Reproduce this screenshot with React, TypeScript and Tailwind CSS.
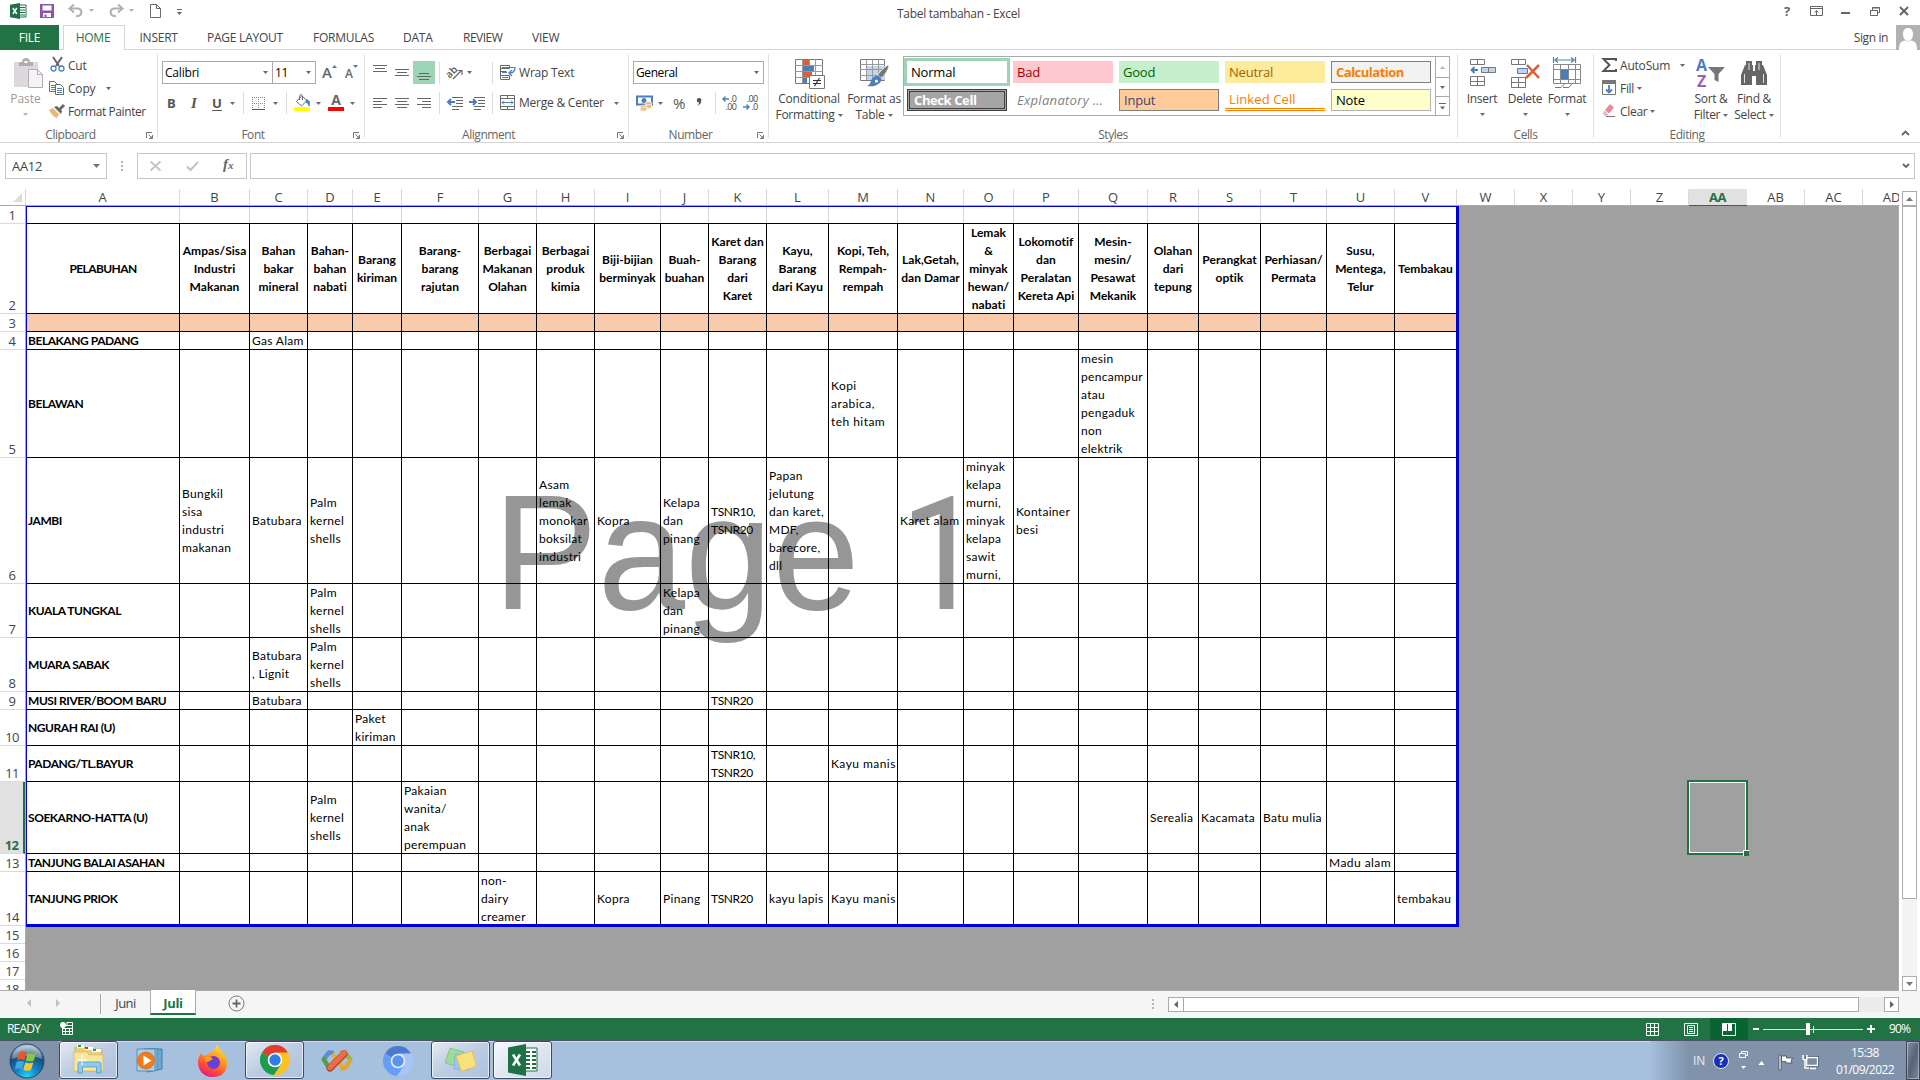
import React from "react";

type Kids = { children?: React.ReactNode };

/* ---------- shared bits ---------- */

function Arrow({ className = "", color = "#6a6a6a" }: { className?: string; color?: string }) {
  return (
    <svg width="5" height="3" viewBox="0 0 5 3" className={"shrink-0 " + className}>
      <path d="M0 0h5L2.500 3z" fill={color} />
    </svg>
  );
}

function Icon({ w, h, className = "", children }: Kids & { w: number; h: number; className?: string }) {
  return (
    <svg width={w} height={h} viewBox={`0 0 ${w} ${h}`} fill="none" className={"shrink-0 overflow-visible " + className}>
      {children}
    </svg>
  );
}

function Launcher() {
  return (
    <Icon w={7} h={7} className="mr-1 ml-[5px] mt-[1px]">
      <path d="M.5 6V.5H6" stroke="#777" />
      <path d="M2.500 2.500L6 6M6.500 3v3.500H3" stroke="#777" />
      <path d="M6.500 3.500v3h-3z" fill="#777" />
    </Icon>
  );
}

function Group({ label, launcher, className, children }: Kids & { label: string; launcher?: boolean; className: string }) {
  return (
    <div className={"flex h-[92px] shrink-0 pt-[4px] " + className}>
      <div className="flex min-w-0 flex-1 flex-col">
        <div className="h-[73px]">{children}</div>
        <div className="flex h-[15px] items-center">
          <span className="flex-1 text-center tracking-[-0.45px] text-[#666]">{label}</span>
          {launcher && <Launcher />}
        </div>
      </div>
      <div className="h-[84px] w-px bg-[#e1e1e1]" />
    </div>
  );
}

function Big({ icon, className, lines, arrow, dim }: { icon: React.ReactNode; className: string; lines: [string, string?]; arrow?: boolean; dim?: boolean }) {
  return (
    <div className={"flex shrink-0 flex-col items-center whitespace-nowrap leading-[16px] " + className + (dim ? " text-[#9b9b9b]" : "")}>
      <div className="mt-[3px] flex h-[32px] items-center">{icon}</div>
      <div className="mt-[2px]">{lines[0]}</div>
      {lines[1] ? (
        <div className="flex items-center gap-[3px]">
          {lines[1]}
          <Arrow />
        </div>
      ) : (
        arrow && <Arrow className="mt-[6px]" color={dim ? "#b5b5b5" : "#6a6a6a"} />
      )}
    </div>
  );
}

const Sep = ({ className = "" }: { className?: string }) => <div className={"h-[22px] w-px shrink-0 bg-[#dcdcdc] " + className} />;

/* ---------- title bar ---------- */

function TitleBar() {
  return (
    <div className="flex h-[25px] items-start">
      <div className="flex h-[23px] w-[200px] items-center">
        <Icon w={17} h={16} className="ml-[10px] mt-[-1px]">
          <path d="M8 2h8v12H8z" fill="#fff" stroke="#217346" />
          <path d="M10 4.500h5M10 7h5M10 9.500h5M10 12h5" stroke="#217346" />
          <path d="M0 1.800L10 0v16L0 14.200z" fill="#1e7145" />
          <path d="M2.800 5l4 6M6.800 5l-4 6" stroke="#fff" strokeWidth="1.500" />
        </Icon>
        <Icon w={14} h={14} className="ml-[13px] mt-[-1px]">
          <path d="M0 0h14v14H0z" fill="#8a56ac" />
          <path d="M2.500 1.500h9v5h-9zM3 9h8v4H3z" fill="#fff" />
          <path d="M4.500 10.500h2V13h-2z" fill="#8a56ac" />
        </Icon>
        <Icon w={16} h={13} className="ml-[14px] mt-[-2px]">
          <path d="M2 4.500h8a4 3.800 0 010 7.500H8" stroke="#b1b1b1" strokeWidth="2" />
          <path d="M6 .5L1.500 4.500 6 8.500" stroke="#b1b1b1" strokeWidth="2" />
        </Icon>
        <Arrow className="ml-[5px] mt-[-2px]" color="#b1b1b1" />
        <Icon w={16} h={13} className="ml-[14px] mt-[-2px]">
          <path d="M14 4.500H6a4 3.800 0 000 7.500h2" stroke="#b1b1b1" strokeWidth="2" />
          <path d="M10 .5l4.500 4-4.500 4" stroke="#b1b1b1" strokeWidth="2" />
        </Icon>
        <Arrow className="ml-[5px] mt-[-2px]" color="#b1b1b1" />
        <Icon w={11} h={14} className="ml-[16px] mt-[-1px]">
          <path d="M.5.5h6l4 4v9H.5z" stroke="#6a6a6a" />
          <path d="M6.500.5v4h4" stroke="#6a6a6a" />
        </Icon>
        <Icon w={5} h={6} className="ml-[16px]">
          <path d="M0 .5h5" stroke="#666" />
          <path d="M0 3h5L2.500 6z" fill="#666" />
        </Icon>
      </div>
      <div className="ml-[600px] w-[317px] pt-[5px] text-center leading-[18px] tracking-[-0.3px]">Tabel tambahan - Excel</div>
      <div className="ml-auto flex h-[22px] w-[139px] items-center">
        <span className="w-[12px] text-center text-[13px] font-bold text-[#666]">?</span>
        <Icon w={13} h={10} className="ml-[17px]">
          <path d="M.5.5h12v9H.5zM0 2.500h13M6.500 9V4.500M4.500 6.500l2-2 2 2" stroke="#666" />
        </Icon>
        <Icon w={9} h={10} className="ml-[18px]">
          <path d="M0 7h9" stroke="#666" strokeWidth="2" />
        </Icon>
        <Icon w={10} h={9} className="ml-[20px]">
          <path d="M2.500 3V.5h7v5H7.500M.5 3.500h7v5h-7z" stroke="#666" />
          <path d="M0 3.500h8M2 1h8" stroke="#666" />
        </Icon>
        <Icon w={10} h={10} className="ml-[19px]">
          <path d="M1 1l8 8M9 1L1 9" stroke="#666" strokeWidth="2" />
        </Icon>
      </div>
    </div>
  );
}

/* ---------- ribbon tabs ---------- */

function RibbonTabs() {
  const line = "border-b border-[#d4d4d4]";
  return (
    <div className="flex h-[25px] tracking-[-0.24px] leading-[25px]">
      <div className="w-[59px] bg-[#217346] text-center text-white">FILE</div>
      <div className={"w-[4px] " + line} />
      <div className="w-[62px] border-x border-t border-[#d4d4d4] bg-white pr-[2px] text-center leading-[23px] text-[#217346]">HOME</div>
      <div className={"flex flex-1 whitespace-nowrap " + line}>
        <span className="ml-[14.500px] w-[67.500px]">INSERT</span>
        <span className="w-[106px]">PAGE LAYOUT</span>
        <span className="w-[90px]">FORMULAS</span>
        <span className="w-[60px]">DATA</span>
        <span className="w-[69px] tracking-[-0.5px]">REVIEW</span>
        <span>VIEW</span>
        <span className="ml-auto mr-[8px] tracking-[-0.4px]">Sign in</span>
      </div>
      <Icon w={24} h={25}>
        <path d="M0 0h24v25H0z" fill="#b1b1b1" />
        <path d="M7 9c0-4 2-6 5-6s5 2 5 6-2 7-5 7-5-3-5-7zM3 25c0-7 2-9 6-9.500l3 1 3-1c4 .5 6 2.500 6 9.500z" fill="#fff" />
      </Icon>
    </div>
  );
}

/* ---------- ribbon groups ---------- */

function ClipboardGroup() {
  return (
    <Group label="Clipboard" launcher className="w-[158px]">
      <div className="flex">
        <Big
          className="ml-[5px] w-[41px]"
          dim
          arrow
          lines={["Paste"]}
          icon={
            <Icon w={30} h={30} className="ml-[4px]">
              <path d="M1 4h24v25H1z" fill="#dcd8dc" />
              <path d="M6 4h3c0-2.500 1.500-4 4-4s4 1.500 4 4h3v4H6z" fill="#b1aeb1" />
              <path d="M11.500 3h3v2h-3z" fill="#fff" />
              <path d="M15.500 11.500h9l5 5v13h-14z" fill="#f6f2f8" stroke="#b1aeb1" />
              <path d="M24.500 11.500v5h5" stroke="#b1aeb1" />
            </Icon>
          }
        />
        <div className="ml-[3px]">
          <div className="flex h-[23px] items-center">
            <Icon w={15} h={15} className="mb-[2px] ml-[1px]">
              <path d="M3 0l6 9M12 0L6 9" stroke="#666" strokeWidth="2" />
              <circle cx="3.500" cy="11.500" r="2.500" stroke="#4a7ebb" strokeWidth="1.300" />
              <circle cx="11.500" cy="11.500" r="2.500" stroke="#4a7ebb" strokeWidth="1.300" />
            </Icon>
            <span className="ml-[3px] tracking-[-0.2px]">Cut</span>
          </div>
          <div className="flex h-[23px] items-center">
            <Icon w={15} h={14} className="mb-[2px]">
              <path d="M.5.5h5l2 2v8h-7z" fill="#fff" stroke="#6a6a6a" />
              <path d="M2 4.500h4M2 6.500h4M2 8.500h4" stroke="#4a7ebb" />
              <path d="M6.500 3.500h5l3 3v7h-8z" fill="#fff" stroke="#6a6a6a" />
              <path d="M8 7.500h5M8 9.500h5M8 11.500h5" stroke="#4a7ebb" />
            </Icon>
            <span className="ml-[4px] tracking-[-0.2px]">Copy</span>
            <Arrow className="ml-[11px]" />
          </div>
          <div className="flex h-[23px] items-center">
            <Icon w={16} h={14} className="mb-[2px]">
              <path d="M0 6l4-2 6 6-2 4c-3-1-6-4-8-8z" fill="#e8b972" />
              <path d="M5 3l3-1 5 5-1 3z" fill="#666" />
              <path d="M10 4.500L14 .5l1.500 1.500-4 4z" fill="#666" stroke="#666" />
            </Icon>
            <span className="ml-[3px] whitespace-nowrap tracking-[-0.42px]">Format Painter</span>
          </div>
        </div>
      </div>
    </Group>
  );
}

function FontGroup() {
  return (
    <Group label="Font" launcher className="w-[207px]">
      <div className="ml-[4px] mt-[7px] flex h-[23px] text-black">
        <div className="flex w-[111px] items-center border border-[#ababab] pl-[2px] tracking-[-0.2px]">
          Calibri
          <Arrow className="ml-auto mr-[4px]" />
        </div>
        <div className="-ml-px flex w-[44px] items-center border border-[#ababab] pl-[2px] tracking-[-0.3px]">
          11
          <Arrow className="ml-auto mr-[4px]" />
        </div>
        <div className="ml-[6px] flex h-full items-end pb-[2px] leading-[20px]">
          <span className="text-[15px] font-semibold leading-[19px] text-[#666]">A</span>
          <Icon w={5} h={3} className="mb-[14px]">
            <path d="M0 3h5L2.500 0z" fill="#4a7ebb" />
          </Icon>
          <span className="ml-[8px] text-[12px] font-semibold leading-[17px] text-[#666]">A</span>
          <Icon w={5} h={3} className="mb-[14px]">
            <path d="M0 0h5L2.500 3z" fill="#4a7ebb" />
          </Icon>
        </div>
      </div>
      <div className="mt-[8px] flex h-[22px] items-center">
        <span className="ml-[9px] w-[8px] text-[13px] font-bold text-[#555]">B</span>
        <span className="ml-[14px] w-[10px] text-center font-[Liberation_Serif] text-[15px] font-bold italic text-[#555]">I</span>
        <span className="ml-[13px] w-[10px] text-center text-[13px] font-bold text-[#555] underline underline-offset-2">U</span>
        <Arrow className="ml-[8px]" />
        <Sep className="ml-[8px]" />
        <Icon w={13} h={13} className="ml-[8px]">
          <path d="M.5 0v12M6.500 0v12M12.500 0v12M0 .5h13M0 6.500h13" stroke="#888" strokeDasharray="1 1" />
          <path d="M0 12.500h13" stroke="#555" />
        </Icon>
        <Arrow className="ml-[8px]" />
        <Sep className="ml-[8px]" />
        <Icon w={17} h={17} className="ml-[7px] mt-[-2px]">
          <path d="M7.500 2L2.500 7.500l5 4.500 5.500-5.500L8 2z" fill="#fff" stroke="#6a6a6a" />
          <path d="M5.500 6V2.500C5.500 0 8.500 0 8.500 2.500V6" stroke="#6a6a6a" />
          <path d="M12.500 5.500c3 1 3.500 3 2.500 6.500-.5-2-1.500-3-3-4z" fill="#4a7ebb" stroke="#4a7ebb" />
          <path d="M0 13h16v4H0z" fill="#ff0" />
        </Icon>
        <Arrow className="ml-[5px]" />
        <div className="ml-[7px] mt-[-2px] flex h-[18px] w-[16px] flex-col items-center border-b-4 border-[red]">
          <span className="text-[14px] font-bold leading-[14px] text-[#666]">A</span>
        </div>
        <Arrow className="ml-[6px]" />
      </div>
    </Group>
  );
}

function Lines({ kind, className = "" }: { kind: "left" | "center" | "right" | "vtop" | "vmid" | "vbot"; className?: string }) {
  const d = {
    left: "M0 3.500h14M0 6.500h9M0 9.500h14M0 12.500h9",
    center: "M0 3.500h14M2 6.500h10M0 9.500h14M2 12.500h10",
    right: "M0 3.500h14M5 6.500h9M0 9.500h14M5 12.500h9",
    vtop: "M0 .5h14M2 3.500h10M0 6.500h14",
    vmid: "M0 4.500h14M2 7.500h10M0 10.500h14",
    vbot: "M2 8.500h10M0 11.500h14M2 14.500h10",
  }[kind];
  return (
    <Icon w={14} h={16} className={className}>
      <path d={d} stroke="#666" />
    </Icon>
  );
}

function AlignmentGroup() {
  return (
    <Group label="Alignment" launcher className="w-[264px]">
      <div className="mt-[7px] flex h-[23px] items-center">
        <Lines kind="vtop" className="ml-[8px]" />
        <Lines kind="vmid" className="ml-[8px]" />
        <div className="ml-[4px] flex h-[23px] w-[22px] items-center justify-center bg-[#9fd5b7]">
          <Lines kind="vbot" />
        </div>
        <Sep className="ml-[4px]" />
        <Icon w={16} h={15} className="ml-[7px]">
          <text x="-1" y="11" fontSize="10" fontWeight="600" fill="#555" fontFamily="Open Sans" transform="rotate(-45 4 8)">ab</text>
          <path d="M6 14l8-8M10.500 5.500H15V10" stroke="#666" strokeWidth="1.200" />
        </Icon>
        <Arrow className="ml-[4px]" />
        <Sep className="ml-[20px]" />
        <Icon w={16} h={16} className="ml-[7px] mt-[-2px]">
          <path d="M.5 1v14M.5 1.500h9v3h-9M.5 7.500h6M.5 15.500h9v-4h-9" stroke="#6a6a6a" />
          <path d="M2 3.500h12M2 8.500h5M2 13.500h6" stroke="#4a7ebb" />
          <path d="M15 3c0 4-1 6-5 6M12 6L9 9l3 3" stroke="#4a7ebb" strokeWidth="1.300" />
        </Icon>
        <span className="ml-[3px] whitespace-nowrap tracking-[-0.2px]">Wrap Text</span>
      </div>
      <div className="mt-[8px] flex h-[22px] items-center">
        <Lines kind="left" className="ml-[8px]" />
        <Lines kind="center" className="ml-[8px]" />
        <Lines kind="right" className="ml-[8px]" />
        <Sep className="ml-[8px]" />
        <Icon w={16} h={14} className="ml-[7px]">
          <path d="M5 1.500h11M9 4.500h7M9 7.500h7M5 10.500h11M5 13.500h7" stroke="#666" />
          <path d="M8 6H2M4 3L1 6l3 3" stroke="#4a7ebb" strokeWidth="2" />
        </Icon>
        <Icon w={16} h={14} className="ml-[6px]">
          <path d="M5 1.500h11M9 4.500h7M9 7.500h7M5 10.500h11M5 13.500h7" stroke="#666" />
          <path d="M0 6h6M4 3l3 3-3 3" stroke="#4a7ebb" strokeWidth="2" />
        </Icon>
        <Sep className="ml-[7px]" />
        <Icon w={15} h={15} className="ml-[7px] mt-[-1px]">
          <path d="M.5.5h14v14H.5zM0 3.500h15M0 11.500h15M7.500 0v3.500M7.500 11.500V15" stroke="#6a6a6a" />
          <path d="M2 7.500h11M4 5.500l-2 2 2 2M11 5.500l2 2-2 2" stroke="#4a7ebb" />
        </Icon>
        <span className="ml-[4px] whitespace-nowrap tracking-[-0.23px]">Merge &amp; Center</span>
        <Arrow className="ml-[10px]" />
      </div>
    </Group>
  );
}

function NumberGroup() {
  return (
    <Group label="Number" launcher className="w-[140px]">
      <div className="ml-[4px] mt-[7px] flex h-[23px] w-[131px] items-center border border-[#ababab] pl-[2px] tracking-[-0.4px] text-black">
        General
        <Arrow className="ml-auto mr-[4px]" />
      </div>
      <div className="mt-[8px] flex h-[22px] items-center">
        <Icon w={17} h={16} className="ml-[7px]">
          <path d="M1 1.500h15v8H1z" fill="#fff" stroke="#4a7ebb" strokeWidth="2" />
          <circle cx="8" cy="5.500" r="2.500" fill="#4a7ebb" />
          <ellipse cx="12.500" cy="8.500" rx="3.500" ry="2" fill="#e8c07d" stroke="#fff" strokeWidth=".6" />
          <ellipse cx="12.500" cy="11.500" rx="3.500" ry="2" fill="#e8c07d" stroke="#fff" strokeWidth=".6" />
          <ellipse cx="7.500" cy="12" rx="3.500" ry="1.800" fill="#e8c07d" stroke="#fff" strokeWidth=".6" />
          <ellipse cx="7.500" cy="14.200" rx="3.500" ry="1.800" fill="#e8c07d" stroke="#fff" strokeWidth=".6" />
        </Icon>
        <Arrow className="ml-[5px]" />
        <span className="ml-[10px] w-[13px] text-[15px] text-[#555]">%</span>
        <Icon w={6} h={8} className="ml-[10px] mt-[-3px]">
          <path d="M3 0a2.200 2.200 0 012.300 2.500C5.300 5 4 6.500 1.500 8 2.500 6.500 3 5.500 3 4.500A2.200 2.200 0 013 0z" fill="#555" />
        </Icon>
        <Sep className="ml-[13px]" />
        <div className="ml-[6px] flex flex-col items-end text-[9px] leading-[8px] tracking-[-0.6px] text-[#444]">
          <span className="flex items-center gap-[1px]">
            <Icon w={7} h={6}>
              <path d="M7 3H1.500M3.500.5L1 3l2.500 2.500" stroke="#4a7ebb" strokeWidth="1.400" />
            </Icon>
            .0
          </span>
          <span>.00</span>
        </div>
        <div className="ml-[7px] flex flex-col items-end text-[9px] leading-[8px] tracking-[-0.6px] text-[#444]">
          <span>.00</span>
          <span className="flex items-center gap-[1px]">
            <Icon w={7} h={6}>
              <path d="M0 3h5.500M3.500.5L6 3 3.500 5.500" stroke="#4a7ebb" strokeWidth="1.400" />
            </Icon>
            .0
          </span>
        </div>
      </div>
    </Group>
  );
}

function StylesGroup() {
  const chip = "flex h-[22px] w-[100px] items-center whitespace-nowrap pl-[4px]";
  return (
    <Group label="Styles" className="w-[689px]">
      <div className="flex tracking-[-0.24px]">
        <Big
          className="ml-[1px] w-[78px]"
          lines={["Conditional", "Formatting"]}
          icon={
            <Icon w={30} h={31} className="ml-[2px]">
              <path d="M.5 1.500h27v24H.5z" fill="#fff" stroke="#777" />
              <path d="M7.500 1v24M14.500 1v24M20.500 1v24M0 7.500h28M0 13.500h28M0 19.500h28" stroke="#999" />
              <path d="M8 2h6v5H8zM8 14h9v5H8z" fill="#d9603b" />
              <path d="M8 8h11v5H8zM8 20h4v5H8z" fill="#4a7ebb" />
              <path d="M14.500 17.500h15v13h-15z" fill="#fff" stroke="#777" />
              <path d="M18 22.500h8M18 25.500h8M24.500 20l-5 8" stroke="#333" strokeWidth="1.200" />
            </Icon>
          }
        />
        <Big
          className="w-[52px]"
          lines={["Format as", "Table"]}
          icon={
            <Icon w={30} h={30} className="ml-[2px]">
              <path d="M.5 1.500h24v21H.5z" fill="#fff" stroke="#777" />
              <path d="M7 8h18v14H7z" fill="#c3d5ea" />
              <path d="M6.500 1v21M12.500 1v21M18.500 1v21M0 6.500h25M0 11.500h25M0 17.500h25" stroke="#999" />
              <path d="M28.500 7c1 3-3 9-7 13l-4-3c4-5 8-9 11-10z" fill="#777" stroke="#fff" strokeWidth=".7" />
              <path d="M17 18c3 0 5 2 4 5-2 4-7 6-14 5 3-1 3-3 4-5 1-3 3-5 6-5z" fill="#4a7ebb" />
              <path d="M15 22c1.500-.8 3 0 3 1.200s-2 1.800-3 1z" fill="#fff" />
            </Icon>
          }
        />
        <div className="ml-[3px] mt-[2px] flex h-[60px] w-[547px] border border-[#ababab] text-[13px] tracking-[-0.2px]">
          <div className="grid w-[531px] grid-cols-[repeat(5,100px)] content-start gap-[6px] pl-[3px] pt-[4px]">
            <div className={chip + " bg-white text-black shadow-[0_0_0_3px_#9fd5b7]"}>Normal</div>
            <div className={chip + " bg-[#ffc7ce] text-[#9c0006]"}>Bad</div>
            <div className={chip + " bg-[#c6efce] text-[#006100]"}>Good</div>
            <div className={chip + " bg-[#ffeb9c] text-[#9c6500]"}>Neutral</div>
            <div className={chip + " border border-[#7f7f7f] bg-[#f2f2f2] pl-[3px] font-bold tracking-[-0.5px] text-[#fa7d00]"}>Calculation</div>
            <div className={chip + " border-3 border-double border-[#3f3f3f] bg-[#a5a5a5] pl-[1px] font-bold tracking-[-0.4px] text-white"}>Check Cell</div>
            <div className={chip + " italic tracking-[0.3px] text-[#7f7f7f]"}>Explanatory ...</div>
            <div className={chip + " border border-[#7f7f7f] bg-[#ffcc99] pl-[3px] text-[#3f3f76]"}>Input</div>
            <div className={chip + " border-b-3 border-double border-[#ff8001] tracking-[0.1px] text-[#fa7d00]"}>Linked Cell</div>
            <div className={chip + " border border-[#b2b2b2] bg-[#ffffcc] pl-[3px] text-black"}>Note</div>
          </div>
          <div className="flex flex-1 flex-col border-l border-[#ababab]">
            <div className="flex h-[20px] items-center justify-center">
              <Icon w={5} h={3}>
                <path d="M0 3h5L2.500 0z" fill="#b1b1b1" />
              </Icon>
            </div>
            <div className="flex h-[20px] items-center justify-center border-y border-[#ababab]">
              <Arrow />
            </div>
            <div className="flex flex-1 items-center justify-center">
              <Icon w={7} h={7}>
                <path d="M0 .5h7" stroke="#666" />
                <path d="M1 3.500h5L3.500 6.500z" fill="#666" />
              </Icon>
            </div>
          </div>
        </div>
      </div>
    </Group>
  );
}

function CellsGroup() {
  return (
    <Group label="Cells" className="w-[136px]">
      <div className="flex tracking-[-0.3px]">
        <Big
          className="ml-[2px] w-[44px]"
          arrow
          lines={["Insert"]}
          icon={
            <Icon w={26} h={28} className="mb-[1px] ml-[2px]">
              <path d="M.5.5h14v5H.5zM7.500.5v5M.5 17.500h14v9H.5zM7.500 17.500v9M.5 22.500h14" stroke="#777" fill="#fff" />
              <path d="M11.500 8.500h14v5h-14z" fill="#c3d5ea" stroke="#777" />
              <path d="M18.500 8.500v5" stroke="#777" />
              <path d="M8 11H2M4.500 8L1.500 11l3 3" stroke="#4a7ebb" strokeWidth="1.800" />
            </Icon>
          }
        />
        <Big
          className="w-[42px]"
          arrow
          lines={["Delete"]}
          icon={
            <Icon w={29} h={29} className="ml-[1px]">
              <path d="M.5.5h14v5H.5zM7.500.5v5M.5 18.500h14v10H.5zM7.500 18.500v10M.5 23.500h14" stroke="#777" fill="#fff" />
              <path d="M6.500 9.500h10v5h-10z" fill="#c3d5ea" stroke="#4a7ebb" />
              <path d="M16 6l12 13M28 6L15 19" stroke="#d9603b" strokeWidth="2.500" />
            </Icon>
          }
        />
        <Big
          className="w-[42px]"
          arrow
          lines={["Format"]}
          icon={
            <Icon w={28} h={32}>
              <path d="M.5 0v6M22.500 0v6M2 3h19M5 .5L2 3l3 2.500M18 .5L21 3l-3 2.500" stroke="#4a7ebb" strokeWidth="1.200" />
              <path d="M.5 7.500h27v19H.5zM7.500 7.500v19M15.500 7.500v19M22.500 7.500v19M0 12.500h28M0 22.500h28" stroke="#888" fill="#fff" />
              <path d="M8 13h7v9H8z" fill="#4a7ebb" />
              <path d="M2 30.500h6l4-4M10 30.500h6l3-4" stroke="#777" />
            </Icon>
          }
        />
      </div>
    </Group>
  );
}

function EditingGroup() {
  return (
    <Group label="Editing" className="w-[187px]">
      <div className="flex tracking-[-0.3px]">
        <div className="w-[99px] pl-[8px]">
          <div className="flex h-[23px] items-center">
            <Icon w={15} h={14} className="mb-[2px]">
              <path d="M14 3V1H1.500l6 6-6 6H14v-2" stroke="#555" strokeWidth="2" />
            </Icon>
            <span className="ml-[3px] tracking-[-0.2px]">AutoSum</span>
            <Arrow className="ml-[10px]" />
          </div>
          <div className="flex h-[23px] items-center">
            <Icon w={14} h={15} className="mb-[3px]">
              <path d="M.5.5h13v14H.5z" fill="#fff" stroke="#777" />
              <path d="M0 0h14v4H0z" fill="#777" />
              <path d="M7 5v8M4 9.500L7 12.500l3-3" stroke="#4a7ebb" strokeWidth="1.800" />
            </Icon>
            <span className="ml-[4px]">Fill</span>
            <Arrow className="ml-[3px]" />
          </div>
          <div className="flex h-[23px] items-center">
            <Icon w={14} h={13} className="mb-[3px]">
              <path d="M8 0l4 3.500-5 6-4-3.500z" fill="#e8899b" />
              <path d="M2.500 6.500l4 3.500-1.500 2H3L.5 9.500z" fill="#f3b9c4" />
              <path d="M4 12.500h9" stroke="#777" />
            </Icon>
            <span className="ml-[4px]">Clear</span>
            <Arrow className="ml-[3px]" />
          </div>
        </div>
        <Big
          className="w-[36px]"
          lines={["Sort &", "Filter"]}
          icon={
            <Icon w={30} h={29}>
              <text x="0" y="12" fontSize="16" fontWeight="700" fill="#4a7ebb" fontFamily="Open Sans">A</text>
              <text x="1" y="28" fontSize="16" fontWeight="700" fill="#9b5fb5" fontFamily="Open Sans">Z</text>
              <path d="M12 8h17l-6.500 7v8l-4-2v-6z" fill="#777" />
            </Icon>
          }
        />
        <Big
          className="w-[50px]"
          lines={["Find &", "Select"]}
          icon={
            <Icon w={26} h={24}>
              <path d="M5 0h6v5H5zM15 0h6v5h-6zM4 4h8v6h2V4h8l4 10v10H15v-9h-4v9H0V14z" fill="#666" />
              <path d="M3.500 13v9M22.500 13v9M8 2v7M18 2v7" stroke="#fff" strokeWidth=".8" />
            </Icon>
          }
        />
      </div>
    </Group>
  );
}

/* ---------- formula bar ---------- */

function FormulaBar() {
  return (
    <div className="flex h-[46px] items-start border-t border-[#d4d4d4] pt-[10px] text-[#444]">
      <div className="ml-[5px] flex h-[26px] w-[102px] items-center border border-[#c6c6c6] pl-[6px] text-[13px] tracking-[-0.3px]">
        AA12
        <Icon w={7} h={4} className="ml-auto mr-[6px]">
          <path d="M0 0h7L3.500 4z" fill="#777" />
        </Icon>
      </div>
      <Icon w={2} h={10} className="ml-[14px] mt-[8px]">
        <path d="M0 0h2v2H0zM0 4h2v2H0zM0 8h2v2H0z" fill="#b5b5b5" />
      </Icon>
      <div className="ml-[14px] flex h-[26px] w-[110px] items-center border border-[#c6c6c6]">
        <Icon w={11} h={10} className="ml-[12px]">
          <path d="M.5.5l10 9M10.500.5l-10 9" stroke="#c3c3c3" strokeWidth="1.800" />
        </Icon>
        <Icon w={13} h={10} className="ml-[25px]">
          <path d="M1 5.500L4.500 9 12 1" stroke="#c3c3c3" strokeWidth="2" />
        </Icon>
        <span className="ml-[24px] mt-[-3px] font-[Liberation_Serif] text-[15px] font-bold italic leading-[20px] text-[#666]">
          f<span className="text-[11px]">x</span>
        </span>
      </div>
      <div className="ml-[3px] flex h-[26px] w-[1665px] items-center border border-[#c6c6c6]">
        <Icon w={8} h={6} className="ml-auto mr-[4px]">
          <path d="M1 1l3 3 3-3" stroke="#666" strokeWidth="1.800" />
        </Icon>
      </div>
    </div>
  );
}

/* ---------- sheet ---------- */

const COLS: [string, number][] = [
  ["A", 154], ["B", 70], ["C", 58], ["D", 45], ["E", 49], ["F", 77], ["G", 58], ["H", 58], ["I", 66], ["J", 48], ["K", 58],
  ["L", 62], ["M", 69], ["N", 66], ["O", 50], ["P", 65], ["Q", 69], ["R", 51], ["S", 62], ["T", 66], ["U", 68], ["V", 62],
];
const REST: [string, number][] = [["W", 58], ["X", 58], ["Y", 58], ["Z", 58], ["AA", 58], ["AB", 58], ["AC", 58], ["AD", 58]];

const HEADERS = [
  "PELABUHAN", "Ampas/Sisa\nIndustri\nMakanan", "Bahan\nbakar\nmineral", "Bahan-\nbahan\nnabati", "Barang\nkiriman",
  "Barang-\nbarang\nrajutan", "Berbagai\nMakanan\nOlahan", "Berbagai\nproduk\nkimia", "Biji-bijian\nberminyak", "Buah-\nbuahan",
  "Karet dan\nBarang\ndari\nKaret", "Kayu,\nBarang\ndari Kayu", "Kopi, Teh,\nRempah-\nrempah", "Lak,Getah,\ndan Damar",
  "Lemak\n&\nminyak\nhewan/\nnabati", "Lokomotif\ndan\nPeralatan\nKereta Api", "Mesin-\nmesin/\nPesawat\nMekanik",
  "Olahan\ndari\ntepung", "Perangkat\noptik", "Perhiasan/\nPermata", "Susu,\nMentega,\nTelur", "Tembakau",
];

type Row = { n: number; h: number; name?: string; cells?: Record<string, string> };

const PALM = "Palm\nkernel\nshells";
const ROWS: Row[] = [
  { n: 1, h: 18 },
  { n: 2, h: 90 },
  { n: 3, h: 18 },
  { n: 4, h: 18, name: "BELAKANG PADANG", cells: { C: "Gas Alam" } },
  { n: 5, h: 108, name: "BELAWAN", cells: { M: "Kopi\narabica,\nteh hitam", Q: "mesin\npencampur\natau\npengaduk\nnon\nelektrik" } },
  {
    n: 6, h: 126, name: "JAMBI",
    cells: {
      B: "Bungkil\nsisa\nindustri\nmakanan", C: "Batubara", D: PALM, H: "Asam\nlemak\nmonokar\nboksilat\nindustri", I: "Kopra",
      J: "Kelapa\ndan\npinang", K: "TSNR10,\nTSNR20", L: "Papan\njelutung\ndan karet,\nMDF,\nbarecore,\ndll", N: "Karet alam",
      O: "minyak\nkelapa\nmurni,\nminyak\nkelapa\nsawit\nmurni,", P: "Kontainer\nbesi",
    },
  },
  { n: 7, h: 54, name: "KUALA TUNGKAL", cells: { D: PALM, J: "Kelapa\ndan\npinang" } },
  { n: 8, h: 54, name: "MUARA SABAK", cells: { C: "Batubara\n, Lignit", D: PALM } },
  { n: 9, h: 18, name: "MUSI RIVER/BOOM BARU", cells: { C: "Batubara", K: "TSNR20" } },
  { n: 10, h: 36, name: "NGURAH RAI (U)", cells: { E: "Paket\nkiriman" } },
  { n: 11, h: 36, name: "PADANG/TL.BAYUR", cells: { K: "TSNR10,\nTSNR20", M: "Kayu manis" } },
  {
    n: 12, h: 72, name: "SOEKARNO-HATTA (U)",
    cells: { D: PALM, F: "Pakaian\nwanita/\nanak\nperempuan", R: "Serealia", S: "Kacamata", T: "Batu mulia" },
  },
  { n: 13, h: 18, name: "TANJUNG BALAI ASAHAN", cells: { U: "Madu alam" } },
  { n: 14, h: 54, name: "TANJUNG PRIOK", cells: { G: "non-\ndairy\ncreamer", I: "Kopra", J: "Pinang", K: "TSNR20", L: "kayu lapis", M: "Kayu manis", V: "tembakau" } },
];

function cellClass(n: number, col: string) {
  if (n === 1) return "border-r-[#d4d4d4]";
  if (n === 2) return "justify-center text-center font-bold border-r-black " + (col === "A" ? "tracking-[-0.6px]" : "tracking-[0.05px]");
  if (n === 3) return "bg-[#f8cbad] border-r-black";
  if (col === "A") return "font-bold pl-[1px] tracking-[-0.45px] border-r-black";
  if (col === "K") return "pl-[2px] tracking-[-0.4px] border-r-black";
  if (col === "M" || col === "U") return "pl-[2px] tracking-[0.45px] border-r-black";
  return "pl-[2px] tracking-[0.3px] border-r-black";
}

function HeaderCell({ name, w, active }: { name: string; w: number; active?: boolean }) {
  return (
    <div
      style={{ width: w }}
      className={
        "flex h-[16px] shrink-0 items-center justify-center border-r text-[13px] leading-[15px] " +
        (active ? "border-[#e1e1e1] bg-[#e1e1e1] font-bold tracking-[-0.5px] text-[#217346] shadow-[0_1px_0_#217346]" : "border-[#dadada] text-[#444]")
      }
    >
      {name}
    </div>
  );
}

function Sheet() {
  return (
    <div className="flex h-[802px] font-[Open_Sans]">
      <div className="flex w-[1899px] flex-col overflow-hidden">
        <div className="z-10 flex h-[16px] w-[1899px] shrink-0">
          <div className="flex h-[16px] w-[26px] shrink-0 items-end justify-end border-r border-[#dadada] pb-[3px] pr-[3px]">
            <Icon w={9} h={9}>
              <path d="M9 0v9H0z" fill="#dcdcdc" />
            </Icon>
          </div>
          {COLS.map(([n, w]) => (
            <HeaderCell key={n} name={n} w={w} />
          ))}
          {REST.map(([n, w]) => (
            <HeaderCell key={n} name={n} w={w} active={n === "AA"} />
          ))}
        </div>
        <div className="flex h-[786px] border-b border-t border-[#ababab]">
          <div className="w-[26px] shrink-0 overflow-hidden border-r border-[#ababab] bg-white">
            {[...ROWS, { n: 15, h: 18 }, { n: 16, h: 18 }, { n: 17, h: 18 }, { n: 18, h: 18 }].map((r) => (
              <div
                key={r.n}
                style={{ height: r.h }}
                className={
                  "flex items-end justify-center border-b text-[13px] leading-[16px] tracking-[-0.6px] " +
                  (r.n === 12 ? "border-r-2 border-b-[#dadada] border-r-[#217346] bg-[#e1e1e1] font-bold text-[#217346]" : "border-[#dadada] pr-[1px] text-[#444]")
                }
              >
                {r.n}
              </div>
            ))}
          </div>
          <div className="relative flex-1 overflow-hidden border-r border-[#ababab] bg-[#a0a0a0]">
            <div className="relative h-[721px] w-[1433px] overflow-hidden border-b-3 border-l border-r-3 border-t border-[#0000d4] bg-white">
              <div className="absolute left-[466px] top-[256px] scale-y-104 whitespace-pre font-[Liberation_Sans] text-[157px] leading-[180px] text-[#969696]">
                Page <span className="-ml-[4px] font-[Roboto] text-[152px] leading-none">1</span>
              </div>
              <div className="relative -mt-px font-[Lato] text-[12px] leading-[18px] text-black">
                {ROWS.map((r) => (
                  <div key={r.n} style={{ height: r.h }} className="flex border-b border-black">
                    {COLS.map(([c, w], i) => (
                      <div
                        key={c}
                        style={{ width: c === "A" ? w - 1 : w }}
                        className={"flex shrink-0 items-center overflow-visible whitespace-pre border-r " + cellClass(r.n, c)}
                      >
                        {r.n === 2 ? HEADERS[i] : c === "A" ? r.name : r.cells?.[c]}
                      </div>
                    ))}
                  </div>
                ))}
              </div>
            </div>
            <div className="absolute left-[1661px] top-[574px] h-[75px] w-[61px] border-2 border-[#217346]">
              <div className="h-full w-full border border-white" />
              <div className="absolute -bottom-[3px] -right-[3px] h-[6px] w-[6px] border-l border-t border-white bg-[#217346]" />
            </div>
          </div>
        </div>
      </div>
      <div className="z-20 flex w-[21px] flex-col bg-white pl-[3px] pt-[2px]">
        <div className="flex h-[15px] w-[15px] items-center justify-center border border-[#ababab]">
          <Icon w={7} h={4}>
            <path d="M0 4h7L3.500 0z" fill="#777" />
          </Icon>
        </div>
        <div className="h-[693px] w-[15px] border border-[#ababab] bg-white" />
        <div className="w-[15px] flex-1 bg-[#f3f3f3]" />
        <div className="flex h-[15px] w-[15px] items-center justify-center border border-[#ababab] bg-white">
          <Icon w={7} h={4}>
            <path d="M0 0h7L3.500 4z" fill="#777" />
          </Icon>
        </div>
      </div>
    </div>
  );
}

/* ---------- sheet tabs + status ---------- */

function SheetTabs() {
  return (
    <div className="z-20 flex h-[27px] bg-[#f5f5f5] text-[13px]">
      <Icon w={34} h={8} className="ml-[27px] mt-[8px]">
        <path d="M4 0v8L0 4zM29 0v8l4-4z" fill="#c0c0c0" />
      </Icon>
      <div className="ml-[39px] mt-[3px] h-[20px] w-px bg-[#ababab]" />
      <div className="flex h-[24px] w-[49px] items-center justify-center tracking-[-0.5px] text-[#444]">Juni</div>
      <div className="-mt-px flex h-[25px] w-[46px] items-center justify-center border-x border-b-2 border-x-[#ababab] border-b-[#217346] bg-white pt-[2px] font-bold tracking-[-0.3px] text-[#217346]">
        Juli
      </div>
      <Icon w={17} h={17} className="ml-[32px] mt-[4px]">
        <circle cx="8.500" cy="8.500" r="7.500" stroke="#777" />
        <path d="M8.500 4.500v8M4.500 8.500h8" stroke="#666" strokeWidth="1.800" />
      </Icon>
      <Icon w={2} h={10} className="ml-[907px] mt-[8px]">
        <path d="M0 0h2v2H0zM0 4h2v2H0zM0 8h2v2H0z" fill="#b5b5b5" />
      </Icon>
      <div className="ml-[14px] mt-[6px] flex h-[15px] w-[731px] bg-[#ececec]">
        <div className="flex w-[16px] items-center justify-center border border-[#ababab] bg-white">
          <Icon w={4} h={7}>
            <path d="M4 0v7L0 3.500z" fill="#666" />
          </Icon>
        </div>
        <div className="w-[675px] border-y border-r border-[#ababab] bg-white" />
        <div className="ml-auto flex w-[15px] items-center justify-center border border-[#ababab] bg-white">
          <Icon w={4} h={7}>
            <path d="M0 0v7l4-3.500z" fill="#666" />
          </Icon>
        </div>
      </div>
    </div>
  );
}

function StatusBar() {
  return (
    <div className="flex h-[22px] items-center bg-[#217346] text-white">
      <span className="ml-[7px] w-[53px] tracking-[-0.8px]">READY</span>
      <Icon w={14} h={13} className="mt-[-1px]">
        <path d="M2.500 3.500h10v9h-10zM2 6.500h11M2 9.500h11M5.500 6v6M9.500 6v6M7 3V.5h5.500V4" stroke="#fff" />
        <circle cx="3" cy="3" r="3" fill="#fff" />
      </Icon>
      <Icon w={13} h={13} className="ml-[1572px]">
        <path d="M.5.5h12v12H.5zM4.500 0v13M8.500 0v13M0 4.500h13M0 8.500h13" stroke="#fff" />
      </Icon>
      <Icon w={14} h={13} className="ml-[25px]">
        <path d="M.5.5h13v12H.5zM3.500 2.500h7v8h-7zM5 4.500h4M5 6.500h4M5 8.500h4" stroke="#fff" />
      </Icon>
      <div className="ml-[12px] flex h-[22px] w-[38px] items-center justify-center bg-[#0a6332]">
        <Icon w={14} h={13}>
          <path d="M.5.5h13v12H.5z" stroke="#fff" />
          <path d="M1 0h4v8H1zM6 0h4v8H6z" fill="#fff" />
        </Icon>
      </div>
      <Icon w={6} h={2} className="ml-[5px]">
        <path d="M0 0h6v2H0z" fill="#fff" />
      </Icon>
      <Icon w={100} h={12} className="ml-[4px]">
        <path d="M0 6.500h100M50.500 3v7" stroke="#dfe9e3" />
        <path d="M43 0h4v12h-4z" fill="#fff" />
      </Icon>
      <Icon w={8} h={8} className="ml-[4px]">
        <path d="M0 3h8v2H0zM3 0h2v8H3z" fill="#fff" />
      </Icon>
      <span className="ml-[14px] tracking-[-0.8px]">90%</span>
    </div>
  );
}

/* ---------- taskbar ---------- */

function TaskButton({ children, className = "" }: Kids & { className?: string }) {
  return (
    <div
      className={
        "flex h-[38px] w-[59px] shrink-0 items-center justify-center rounded-[3px] border border-[#3f4a5c] bg-gradient-to-br from-[#e4eaf3] via-[#bccce2] to-[#adc2de] shadow-[inset_0_0_0_1px_rgba(255,255,255,0.65)] " +
        className
      }
    >
      {children}
    </div>
  );
}

function Taskbar() {
  return (
    <div className="flex h-[40px] border-t border-[#4c5568] bg-[#a6c0dd] shadow-[inset_0_1px_0_#c9d8ea]">
      <div className="flex w-[59px] shrink-0 items-center bg-[#8093ab] pl-[9px]">
        <svg width="36" height="36" viewBox="0 0 36 36">
          <defs>
            <radialGradient id="orb" cx="50%" cy="95%" r="90%">
              <stop offset="0" stopColor="#25d0ff" />
              <stop offset=".4" stopColor="#0e7fc0" />
              <stop offset=".75" stopColor="#1c4a74" />
              <stop offset="1" stopColor="#9fb9cf" />
            </radialGradient>
          </defs>
          <circle cx="18" cy="18" r="17" fill="url(#orb)" stroke="#274766" />
          <path d="M3 16C4 7 11 2.500 18 2.500S32 7 33 16c-9-4-20-4-30 0z" fill="#fff" opacity=".35" />
          <path d="M10 9.500c3-1.500 5-1.500 7.500-.3L15.500 17c-2.500-1.200-5-1-7.500.2z" fill="#e8562a" />
          <path d="M18.700 9.700c3 1.500 5.500 1.300 8.300.2l-2.300 7.800c-2.800 1-5 1-8-.3z" fill="#8cc63e" />
          <path d="M7.600 18.800c2.600-1.200 5-1.200 7.500-.1l-2 7.500c-2.500-1.200-5-1-7.300.2z" fill="#3fa4e6" />
          <path d="M16.300 19.200c3 1.400 5.200 1.200 8 .3L22 27c-2.800 1-5 1-7.700-.2z" fill="#fbc82c" />
        </svg>
      </div>
      <TaskButton>
        <svg width="32" height="32" viewBox="0 0 32 32">
          <path d="M2 3h9l2 2h16v22H2z" fill="#e9cf78" stroke="#c8a84a" strokeWidth=".7" />
          <path d="M4 1h7v3H4zM12 3h8v3h-8zM19 5h9v3h-9z" fill="#fff" />
          <path d="M5 1h3v2H5z" fill="#1ba12c" />
          <path d="M12 3h3v2h-3z" fill="#d43c2a" />
          <path d="M20 5h3v2h-3z" fill="#2a84d4" />
          <path d="M1 8h13l2 3h14v16H1z" fill="#f8e6a0" stroke="#d8ba5c" strokeWidth=".7" />
          <path d="M5 29V19.500Q5 18 6.500 18h20q1.500 0 1.500 1.500V29h-4.500v-6h-14v6z" fill="#8fcbe8" stroke="#4a9cc8" strokeWidth=".8" />
          <path d="M9 11v10M4 16h10" stroke="#fff" />
        </svg>
      </TaskButton>
      <div className="flex w-[64px] items-center justify-center">
        <svg width="30" height="28" viewBox="0 0 30 28">
          <path d="M12 2h15v20l-15 3z" fill="#6fa8cc" stroke="#3d7eae" />
          <path d="M9 1.500h13v22H9z" fill="#8fc1de" stroke="#3d7eae" strokeWidth=".7" />
          <path d="M2 2h18v22H2z" fill="#a9cfe6" stroke="#5390ba" />
          <circle cx="11" cy="13.500" r="8.500" fill="#f27a1a" stroke="#d65f0c" strokeWidth=".6" />
          <path d="M8.500 8.500l8 5-8 5z" fill="#fff" />
        </svg>
      </div>
      <div className="flex w-[60px] items-center justify-center pl-[2px]">
        <svg width="32" height="34" viewBox="0 0 32 34">
          <defs>
            <linearGradient id="fox" x1=".8" y1="0" x2=".3" y2="1">
              <stop offset="0" stopColor="#ffe53b" />
              <stop offset=".4" stopColor="#ff9a1f" />
              <stop offset=".75" stopColor="#ff4a3a" />
              <stop offset="1" stopColor="#e31587" />
            </linearGradient>
          </defs>
          <path d="M20 1c2 3 5 5 5 8 2 0 3 2 3 2 4 8 3 22-12 22C5 33 1 25 1 18c0-5 3-9 3-9l2 3c3-1 5-1 8-4 2-1 4-3 6-7z" fill="url(#fox)" />
          <circle cx="16.500" cy="18.500" r="6.500" fill="#6b3fd4" />
          <path d="M7 13c3-1 7-1 9 2-3 1-3 3-7 3z" fill="#ff9a1f" />
        </svg>
      </div>
      <TaskButton className="ml-[3px]">
        <svg width="30" height="30" viewBox="0 0 30 30">
          <path d="M15 15L2 7.500A15 15 0 0128 7.500z" fill="#e33b2e" />
          <path d="M15 15l-13-7.500A15 15 0 0014 30l7.500-11z" fill="#1d9b4e" />
          <path d="M15 7.500h13A15 15 0 0114 30l7.500-11z" fill="#fcc31e" />
          <circle cx="15" cy="15" r="7.300" fill="#fff" />
          <circle cx="15" cy="15" r="5.700" fill="#2f7de9" />
        </svg>
      </TaskButton>
      <div className="flex w-[64px] items-center justify-center pl-[2px]">
        <svg width="34" height="24" viewBox="0 0 34 24" fill="none">
          <path d="M14 4L9 3.500 3.500 10.500" stroke="#5b8fd0" strokeWidth="4.500" strokeLinejoin="round" />
          <path d="M3 9l6 10 5-1" stroke="#5a9c48" strokeWidth="4.500" strokeLinejoin="round" />
          <path d="M20 4l5-.5 6 8" stroke="#9bb83a" strokeWidth="4.500" strokeLinejoin="round" />
          <path d="M31 11l-6 8h-5" stroke="#e0a82e" strokeWidth="4.500" strokeLinejoin="round" />
          <path d="M12 5l10 12" stroke="#d8b53a" strokeWidth="4.500" />
          <path d="M10 19L24 5" stroke="#a83a22" strokeWidth="7" strokeLinecap="round" />
          <path d="M10 18.500L24 4.500" stroke="#ee6a48" strokeWidth="5.500" strokeLinecap="round" />
        </svg>
      </div>
      <div className="flex w-[60px] items-center justify-center">
        <svg width="30" height="30" viewBox="0 0 30 30">
          <path d="M15 15L2 7.500A15 15 0 0128 7.500z" fill="#4a7bd0" />
          <path d="M15 15l-13-7.500A15 15 0 0014 30l7.500-11z" fill="#669df6" />
          <path d="M15 7.500h13A15 15 0 0114 30l7.500-11z" fill="#a6c6f8" />
          <circle cx="15" cy="15" r="7.300" fill="#e6effc" />
          <circle cx="15" cy="15" r="5.700" fill="#5c93ee" />
        </svg>
      </div>
      <TaskButton className="ml-[3px]">
        <svg width="32" height="26" viewBox="0 0 32 26">
          <path d="M5 1l14 4-4 15L0 16z" fill="#9ddb9a" stroke="#6fb86c" strokeWidth=".6" />
          <path d="M10 7l14 1-1 15-14-1z" fill="#9cc6ee" stroke="#78a8d8" strokeWidth=".6" />
          <path d="M11 9l16-5 4.500 15-15 5.500z" fill="#f8e178" stroke="#d8b848" strokeWidth=".6" />
        </svg>
      </TaskButton>
      <TaskButton className="ml-[3px] from-[#f6f8fb] via-[#dfe7f1] to-[#ccd9ea]">
        <svg width="30" height="32" viewBox="0 0 30 32" fill="none">
          <path d="M16 4h13v23H16z" fill="#fff" stroke="#1e7145" />
          <path d="M18 8h4M24 8h4M18 12h4M24 12h4M18 16h4M24 16h4M18 20h4M24 20h4M18 24h4M24 24h4" stroke="#1e7145" strokeWidth="2" />
          <path d="M0 3.500L18 0v32L0 28.500z" fill="#1e7145" />
          <path d="M5 10.500l7 11M12 10.500l-7 11" stroke="#fff" strokeWidth="2.500" />
        </svg>
      </TaskButton>
      <div className="ml-auto flex w-[270px] items-center bg-gradient-to-r from-[#a6c0dd] to-[#8093ab] to-[14%] text-white">
        <span className="ml-[43px] w-[20px] text-[#e8edf3]">IN</span>
        <Icon w={16} h={16}>
          <circle cx="8" cy="8" r="7.500" fill="#1a2fb8" stroke="#dfe5f5" />
          <text x="8" y="12" fontSize="11" fontWeight="700" textAnchor="middle" fill="#fff" fontFamily="Open Sans">?</text>
        </Icon>
        <Icon w={9} h={20} className="ml-[10px]">
          <path d="M2.500 2.500V.5h6v4H6.500M.5 2.500h6v4h-6z" stroke="#fff" />
          <path d="M2 15h5L4.500 18z" fill="#fff" />
        </Icon>
        <Icon w={9} h={6} className="ml-[9px] mt-[4px]">
          <path d="M.5 5.500L4.500.5l4 5z" fill="#fff" stroke="#55637a" strokeWidth=".5" />
        </Icon>
        <Icon w={16} h={16} className="ml-[12px] mt-[2px]">
          <path d="M1 1h2v15H1zM3.500 2h5v2h6l-1.500 2.500L14 9H8V7.500H3.500z" fill="#fff" stroke="#333d4c" strokeWidth=".7" />
        </Icon>
        <Icon w={16} h={16} className="ml-[8px] mt-[2px]">
          <path d="M4.500 3.500h11v8h-11z" fill="#7b8ca5" stroke="#2f3948" strokeWidth="2.600" />
          <path d="M4.500 3.500h11v8h-11zM8 14.500h6" fill="#7b8ca5" stroke="#fff" strokeWidth="1.400" />
          <path d="M1 1v3a2 2 0 004 0V1M3 5v9h4" stroke="#fff" strokeWidth="1.500" />
        </Icon>
        <div className="ml-[14px] w-[66px] text-center text-[12px] leading-[17px] tracking-[-0.55px]">
          <div>15:38</div>
          <div>01/09/2022</div>
        </div>
        <div className="ml-auto h-[39px] w-[14px] border border-[#3c4657] bg-gradient-to-br from-[#8492a8] via-[#56637a] to-[#7d8aa0] shadow-[inset_0_0_0_1px_rgba(255,255,255,0.35)]" />
      </div>
    </div>
  );
}

export default function App() {
  return (
    <div className="flex h-[1080px] w-[1920px] flex-col overflow-hidden bg-white font-[Open_Sans] text-[12px] leading-[16px] text-[#444]">
      <TitleBar />
      <RibbonTabs />
      <div className="flex h-[92px]">
        <ClipboardGroup />
        <FontGroup />
        <AlignmentGroup />
        <NumberGroup />
        <StylesGroup />
        <CellsGroup />
        <EditingGroup />
        <Icon w={9} h={6} className="mb-[6px] ml-auto mr-[10px] self-end">
          <path d="M1 5l3.500-3.500L8 5" stroke="#666" strokeWidth="1.800" />
        </Icon>
      </div>
      <FormulaBar />
      <div className="h-px" />
      <Sheet />
      <SheetTabs />
      <StatusBar />
      <Taskbar />
    </div>
  );
}
